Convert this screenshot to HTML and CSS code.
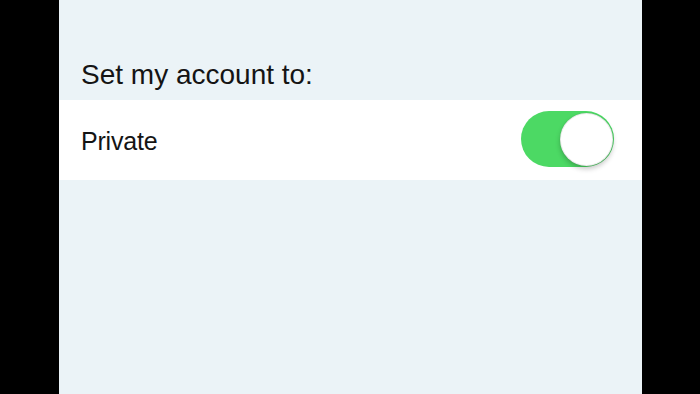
FILE: index.html
```html
<!DOCTYPE html>
<html>
<head>
<meta charset="utf-8">
<link rel="stylesheet" href="styles.css">
</head>
<body>
<div class="screen">
  <div class="panel">
    <div class="section-title">Set my account to:</div>
    <div class="row">
      <span class="row-label">Private</span>
      <div class="toggle on"><div class="knob"></div></div>
    </div>
  </div>
</div>
</body>
</html>
```

FILE: styles.css
```css
html, body {
  margin: 0;
  padding: 0;
  background: #000;
}
.screen {
  width: 700px;
  height: 394px;
  display: flex;
  background: #000;
  overflow: hidden;
}
.panel {
  margin-left: 59px;
  width: 583px;
  height: 394px;
  background: #ebf3f7;
  font-family: "Liberation Sans", Arial, sans-serif;
  color: #141414;
}
.section-title {
  padding: 61px 0 11px 22px;
  font-size: 28px;
  line-height: 28px;
}
.row {
  height: 80px;
  background: #fff;
  display: flex;
  align-items: center;
  justify-content: space-between;
  padding: 0 28px 0 22px;
}
.row-label {
  font-size: 25px;
  line-height: 25px;
  margin-top: 3px;
  letter-spacing: -0.2px;
}
.toggle {
  width: 93px;
  height: 56px;
  border-radius: 28px;
  background: #4cd964;
  display: flex;
  align-items: center;
  justify-content: flex-end;
  padding: 0 1px;
  box-sizing: border-box;
  margin-top: -2px;
}
.knob {
  width: 53px;
  height: 53px;
  border-radius: 50%;
  background: #fff;
  box-sizing: border-box;
  border: 1px solid rgba(0, 0, 0, 0.08);
  box-shadow: 0 3px 5px rgba(0, 0, 0, 0.22), 0 0 1px rgba(0, 0, 0, 0.15);
}
```
